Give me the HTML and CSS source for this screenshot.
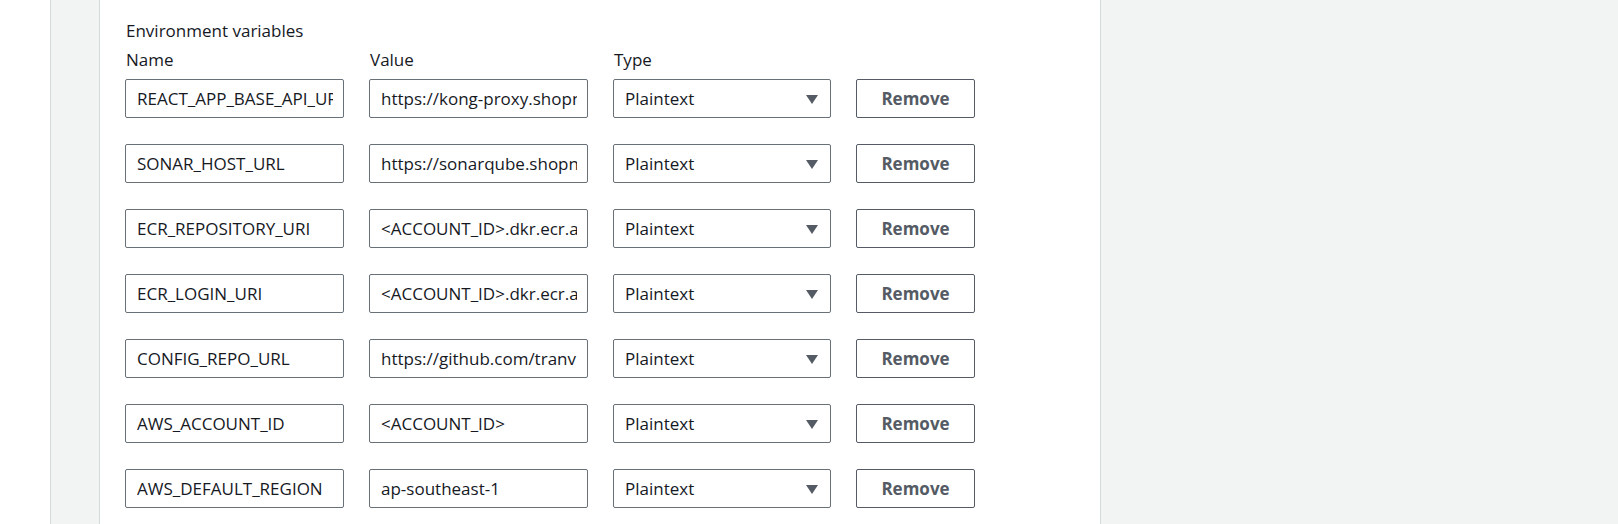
FILE: index.html
```html
<!DOCTYPE html>
<html>
<head>
<meta charset="utf-8">
<link rel="stylesheet" href="styles.css">
</head>
<body>
<div class="page">
  <div class="blank"></div>
  <div class="gutter"></div>
  <div class="panel">
    <div class="section-title">Environment variables</div>
    <div class="row head">
      <div class="col-name label">Name</div>
      <div class="col-value label">Value</div>
      <div class="col-type label">Type</div>
    </div>
    <div class="rows">
      <div class="row">
        <div class="field col-name"><span class="field-text">REACT_APP_BASE_API_URL</span></div>
        <div class="field col-value"><span class="field-text">https://kong-proxy.shopnow</span></div>
        <div class="field select col-type"><span class="field-text">Plaintext</span><span class="caret"></span></div>
        <button class="btn">Remove</button>
      </div>
      <div class="row">
        <div class="field col-name"><span class="field-text">SONAR_HOST_URL</span></div>
        <div class="field col-value"><span class="field-text">https://sonarqube.shopnow</span></div>
        <div class="field select col-type"><span class="field-text">Plaintext</span><span class="caret"></span></div>
        <button class="btn">Remove</button>
      </div>
      <div class="row">
        <div class="field col-name"><span class="field-text">ECR_REPOSITORY_URI</span></div>
        <div class="field col-value"><span class="field-text">&lt;ACCOUNT_ID&gt;.dkr.ecr.ap</span></div>
        <div class="field select col-type"><span class="field-text">Plaintext</span><span class="caret"></span></div>
        <button class="btn">Remove</button>
      </div>
      <div class="row">
        <div class="field col-name"><span class="field-text">ECR_LOGIN_URI</span></div>
        <div class="field col-value"><span class="field-text">&lt;ACCOUNT_ID&gt;.dkr.ecr.ap</span></div>
        <div class="field select col-type"><span class="field-text">Plaintext</span><span class="caret"></span></div>
        <button class="btn">Remove</button>
      </div>
      <div class="row">
        <div class="field col-name"><span class="field-text">CONFIG_REPO_URL</span></div>
        <div class="field col-value"><span class="field-text">https://github.com/tranv</span></div>
        <div class="field select col-type"><span class="field-text">Plaintext</span><span class="caret"></span></div>
        <button class="btn">Remove</button>
      </div>
      <div class="row">
        <div class="field col-name"><span class="field-text">AWS_ACCOUNT_ID</span></div>
        <div class="field col-value"><span class="field-text">&lt;ACCOUNT_ID&gt;</span></div>
        <div class="field select col-type"><span class="field-text">Plaintext</span><span class="caret"></span></div>
        <button class="btn">Remove</button>
      </div>
      <div class="row">
        <div class="field col-name"><span class="field-text">AWS_DEFAULT_REGION</span></div>
        <div class="field col-value"><span class="field-text">ap-southeast-1</span></div>
        <div class="field select col-type"><span class="field-text">Plaintext</span><span class="caret"></span></div>
        <button class="btn">Remove</button>
      </div>
    </div>
  </div>
  <div class="rest"></div>
</div>
</body>
</html>
```

FILE: styles.css
```css
* { box-sizing: border-box; }
html, body { margin: 0; padding: 0; height: 100%; }
body {
  font-family: "Open Sans", "Noto Sans", sans-serif;
  font-size: 17px;
  color: #16191f;
  background: #ffffff;
}
.page {
  display: flex;
  height: 524px;
  overflow: hidden;
}
.blank { width: 50px; background: #ffffff; flex: none; }
.gutter {
  width: 49px;
  flex: none;
  background: #f2f3f3;
  border-left: 1px solid #d5dbdb;
}
.panel {
  width: 1002px;
  flex: none;
  background: #ffffff;
  border-left: 1px solid #d5dbdb;
  border-right: 1px solid #d5dbdb;
  padding: 16px 0 0 25px;
}
.rest { flex: 1; background: #f2f3f3; }
.section-title {
  line-height: 29px;
  padding-left: 1px;
}
.row {
  display: flex;
  align-items: center;
  gap: 25px;
}
.head { line-height: 29px; margin-bottom: 5px; }
.label { padding-left: 1px; }
.rows {
  display: flex;
  flex-direction: column;
  gap: 26px;
}
.col-name, .col-value { width: 219px; flex: none; }
.col-type { width: 218px; flex: none; }
.field {
  height: 39px;
  border: 1px solid #687078;
  border-radius: 2px;
  padding: 0 10px 0 11px;
  display: flex;
  align-items: center;
  background: #ffffff;
}
.field-text {
  flex: 1;
  min-width: 0;
  overflow: hidden;
  white-space: nowrap;
}
.select { padding-right: 12px; }
.caret {
  flex: none;
  width: 0;
  height: 0;
  border-left: 6px solid transparent;
  border-right: 6px solid transparent;
  border-top: 9px solid #545b64;
  margin-top: 1px;
}
.btn {
  width: 119px;
  height: 39px;
  flex: none;
  background: #ffffff;
  border: 1px solid #545b64;
  border-radius: 2px;
  font-family: inherit;
  font-size: 17px;
  font-weight: 700;
  color: #545b64;
  padding: 0;
}
```
